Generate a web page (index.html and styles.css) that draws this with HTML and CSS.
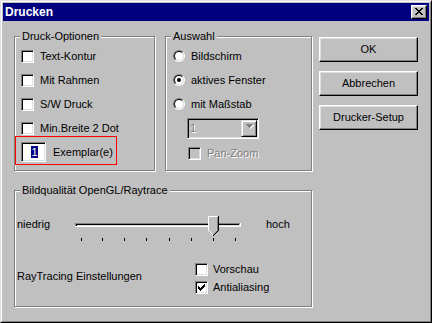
FILE: index.html
```html
<html>
  <head>
    <link rel="stylesheet" href="styles.css">
  </head>
  <body>
    <div class="window">
      <div class="frame">
        <div class="titlebar">
          <span class="title">Drucken</span>
          <span class="close">
            <svg width="8" height="7" viewBox="0 0 8 7"><path fill="#000" d="M0 0h2v1H0zM6 0h2v1H6zM1 1h2v1H1zM5 1h2v1H5zM2 2h4v1H2zM3 3h2v1H3zM2 4h4v1H2zM1 5h2v1H1zM5 5h2v1H5zM0 6h2v1H0zM6 6h2v1H6z"/></svg>
          </span>
        </div>
        <div class="main">
          <div class="left">
            <div class="top-row">
              <div class="group group-options">
                <div class="legend">Druck-Optionen</div>
                <div class="options">
                  <div class="row"><span class="check"></span><span class="label">Text-Kontur</span></div>
                  <div class="row"><span class="check"></span><span class="label">Mit Rahmen</span></div>
                  <div class="row"><span class="check"></span><span class="label">S/W Druck</span></div>
                  <div class="row"><span class="check"></span><span class="label">Min.Breite 2 Dot</span></div>
                  <div class="copies">
                    <span class="edit"><span class="sel">1</span></span>
                    <span class="copies-label">Exemplar(e)</span>
                  </div>
                </div>
              </div>
              <div class="group group-select">
                <div class="legend">Auswahl</div>
                <div class="choices">
                  <div class="radio-row"><span class="radio"><span class="ring"></span></span><span class="label">Bildschirm</span></div>
                  <div class="radio-row"><span class="radio"><span class="ring"><span class="dot"></span></span></span><span class="label">aktives Fenster</span></div>
                  <div class="radio-row"><span class="radio"><span class="ring"></span></span><span class="label">mit Maßstab</span></div>
                  <div class="combo">
                    <span class="combo-value">1</span>
                    <span class="combo-btn">
                      <svg width="8" height="5" viewBox="0 0 8 5"><path fill="#fff" d="M1 1h7v1H1zM2 2h5v1H2zM3 3h3v1H3zM4 4h1v1H4z"/><path fill="#808080" d="M0 0h7v1H0zM1 1h5v1H1zM2 2h3v1H2zM3 3h1v1H3z"/></svg>
                    </span>
                  </div>
                  <div class="row pan"><span class="check disabled"></span><span class="label muted">Pan-Zoom</span></div>
                </div>
              </div>
            </div>
            <div class="group group-quality">
              <div class="legend">Bildqualität OpenGL/Raytrace</div>
              <div class="slider-row">
                <span class="low">niedrig</span>
                <svg class="track" width="170" height="28" viewBox="0 0 170 28">
                  <path fill="#808080" d="M0 9h165v1H0zM0 10h1v2H0z"/>
                  <path fill="#000" d="M1 10h163v1H1zM1 11h1v1H1z"/>
                  <path fill="#dfdfdf" d="M2 11h163v1H2z"/>
                  <path fill="#fff" d="M0 12h166v1H0zM165 9h1v3h-1z"/>
                  <path fill="#000" d="M6 24h1v3H6zM27 24h1v3h-1zM49 24h1v3h-1zM71 24h1v3h-1zM94 24h1v3h-1zM116 24h1v3h-1zM138 24h1v3h-1zM160 24h1v3h-1z"/>
                  <g transform="translate(133 2)">
                    <path fill="#c0c0c0" d="M1 1h8v14H1zM2 15h6v1H2zM3 16h4v1H3zM4 17h2v1H4z"/>
                    <path fill="#fff" d="M0 0h10v1H0zM0 1h1v14H0zM1 15h1v1H1zM2 16h1v1H2zM3 17h1v1H3zM4 18h1v1H4z"/>
                    <path fill="#808080" d="M9 1h1v14H9zM8 15h1v1H8zM7 16h1v1H7zM6 17h1v1H6zM5 18h1v1H5z"/>
                    <path fill="#000" d="M10 0h1v15h-1zM9 15h1v1H9zM8 16h1v1H8zM7 17h1v1H7zM6 18h1v1H6zM5 19h1v1H5z"/>
                  </g>
                </svg>
                <span class="high">hoch</span>
              </div>
              <div class="rt-row">
                <span class="rt-label">RayTracing Einstellungen</span>
                <div class="rt-checks">
                  <div class="row"><span class="check"></span><span class="label">Vorschau</span></div>
                  <div class="row">
                    <span class="check">
                      <svg width="7" height="7" viewBox="0 0 7 7"><path fill="#000" d="M6 0h1v1H6zM5 1h2v1H5zM0 2h1v1H0zM4 2h3v1H4zM0 3h2v1H0zM3 3h3v1H3zM0 4h5v1H0zM1 5h3v1H1zM2 6h1v1H2z"/></svg>
                    </span>
                    <span class="label">Antialiasing</span>
                  </div>
                </div>
              </div>
            </div>
          </div>
          <div class="buttons">
            <button class="btn">OK</button>
            <button class="btn">Abbrechen</button>
            <button class="btn">Drucker-Setup</button>
          </div>
        </div>
      </div>
    </div>
  </body>
</html>
```

FILE: styles.css
```css
html, body{
  margin: 0;
  padding: 0;
}
body{
  background: #c0c0c0;
  color: #000;
  font-family: "Liberation Sans", Arial, sans-serif;
  font-size: 11px;
  line-height: 13px;
}
.window{
  width: 432px;
  height: 323px;
  box-sizing: border-box;
  border: 1px solid;
  border-color: #dfdfdf #000 #000 #dfdfdf;
}
.frame{
  height: 100%;
  box-sizing: border-box;
  border: 1px solid;
  border-color: #fff #808080 #808080 #fff;
  padding: 1px;
}
.titlebar{
  display: flex;
  justify-content: space-between;
  align-items: flex-start;
  height: 18px;
  padding-left: 2px;
  background: #000080;
  color: #fff;
  font-size: 12px;
  font-weight: bold;
  line-height: 18px;
}
.close{
  width: 16px;
  height: 14px;
  box-sizing: border-box;
  margin: 2px 2px 0 0;
  padding: 2px 0 0 3px;
  background: #c0c0c0;
  border: 1px solid;
  border-color: #fff #000 #000 #fff;
  box-shadow: inset -1px -1px #808080, inset 1px 1px #dfdfdf;
}
svg{
  display: block;
}
.main{
  display: flex;
  padding: 15px 11px 0;
}
.left{
  width: 298px;
}
.top-row{
  display: flex;
  gap: 10px;
}
.group{
  box-sizing: border-box;
  border: 1px solid #808080;
  box-shadow: 1px 1px 0 #fff, inset 1px 1px 0 #fff;
}
.legend{
  width: fit-content;
  margin: -7px 0 0 5px;
  padding: 0 2px;
  background: #c0c0c0;
}
.group-options{
  width: 141px;
  height: 135px;
}
.group-select{
  width: 147px;
  height: 135px;
}
.group-quality{
  height: 117px;
  margin-top: 19px;
}

/* checkboxes */
.options{
  padding: 7px 0 0 6px;
}
.row{
  display: flex;
  align-items: center;
  height: 13px;
}
.options .row + .row{
  margin-top: 11px;
}
.check{
  width: 13px;
  height: 13px;
  box-sizing: border-box;
  padding: 2px 0 0 2px;
  border: 1px solid;
  border-color: #808080 #fff #fff #808080;
  box-shadow: inset 1px 1px #000, inset -1px -1px #dfdfdf;
  background: #fff;
}
.check.disabled{
  background: #c0c0c0;
}
.options .label{
  margin-left: 6px;
}
.muted{
  color: #808080;
  text-shadow: 1px 1px 0 #fff;
}

/* copies field with the red marker */
.copies{
  display: flex;
  align-items: center;
  width: 102px;
  height: 29px;
  box-sizing: border-box;
  margin: 1px 0 0 -6px;
  padding: 3px 0 0 5px;
  border: 1px solid #f00;
}
.edit{
  width: 25px;
  height: 20px;
  box-sizing: border-box;
  padding: 3px 0 0 9px;
  border: 1px solid;
  border-color: #808080 #fff #fff #808080;
  box-shadow: inset 1px 1px #000, inset -1px -1px #dfdfdf;
  background: #fff;
}
.sel{
  display: block;
  width: 7px;
  height: 12px;
  line-height: 12px;
  text-align: center;
  background: #000080;
  color: #fff;
}
.copies-label{
  margin-left: 7px;
}

/* radio buttons */
.choices{
  padding: 7px 0 0 7px;
}
.radio-row{
  display: flex;
  align-items: flex-start;
  height: 13px;
}
.radio-row + .radio-row{
  margin-top: 11px;
}
.radio{
  width: 12px;
  height: 12px;
  box-sizing: border-box;
  border-radius: 50%;
  border: 1px solid;
  border-color: #808080 #fff #fff #808080;
}
.ring{
  display: flex;
  align-items: center;
  justify-content: center;
  width: 10px;
  height: 10px;
  box-sizing: border-box;
  border-radius: 50%;
  border: 1px solid;
  border-color: #000 #dfdfdf #dfdfdf #000;
  background: #fff;
}
.dot{
  width: 4px;
  height: 4px;
  border-radius: 50%;
  background: #000;
}
.radio-row .label{
  margin-left: 6px;
}
.combo{
  display: flex;
  width: 72px;
  height: 21px;
  box-sizing: border-box;
  margin: 7px 0 0 14px;
  padding: 1px;
  border: 1px solid;
  border-color: #808080 #fff #fff #808080;
  box-shadow: inset 1px 1px #000, inset -1px -1px #dfdfdf;
  background: #c0c0c0;
}
.combo-value{
  flex: 1;
  padding-left: 1px;
  line-height: 17px;
  color: #808080;
  text-shadow: 1px 1px 0 #fff;
}
.combo-btn{
  width: 16px;
  height: 17px;
  box-sizing: border-box;
  padding: 3px 0 0 4px;
  border: 1px solid;
  border-color: #dfdfdf #000 #000 #dfdfdf;
  box-shadow: inset 1px 1px #fff, inset -1px -1px #808080;
}
.pan{
  margin: 8px 0 0 15px;
}
.pan .label{
  margin-left: 6px;
}

/* quality */
.slider-row{
  display: flex;
  align-items: flex-start;
  margin-top: 17px;
  padding-left: 2px;
}
.low{
  width: 58px;
  margin-top: 4px;
}
.high{
  margin: 4px 0 0 21px;
}
.rt-row{
  display: flex;
  align-items: flex-start;
  margin-top: 21px;
  padding-left: 2px;
}
.rt-label{
  width: 178px;
  margin-top: 7px;
}
.rt-checks{
  display: flex;
  flex-direction: column;
  gap: 5px;
}
.rt-checks .label{
  margin-left: 5px;
}

/* push buttons */
.buttons{
  display: flex;
  flex-direction: column;
  gap: 9px;
  margin: 1px 0 0 7px;
}
.btn{
  width: 99px;
  height: 25px;
  box-sizing: border-box;
  padding: 0;
  border: 1px solid;
  border-color: #fff #000 #000 #fff;
  box-shadow: inset -1px -1px #808080, inset 1px 1px #dfdfdf;
  background: #c0c0c0;
  color: #000;
  font: inherit;
}
```
